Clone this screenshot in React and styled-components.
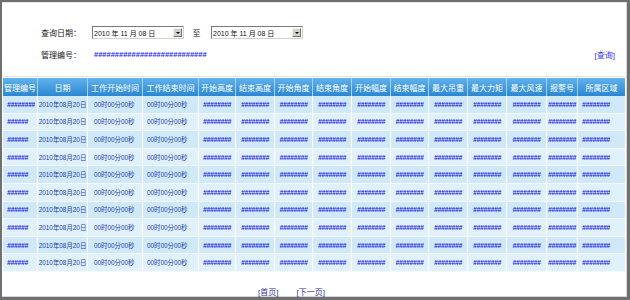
import React from 'react';
import styled, { createGlobalStyle } from 'styled-components';

const GlobalStyle = createGlobalStyle`
  html, body {
    margin: 0;
    padding: 0;
    background: #ffffff;
  }
`;

const COLS = [35, 50, 55, 56, 37, 39, 38, 39, 39, 38, 39, 39, 40, 31, 47];

const HEADERS = [
  '管理编号', '日期', '工作开始时间', '工作结束时间', '开始高度', '结束高度',
  '开始角度', '结束角度', '开始幅度', '结束幅度', '最大吊重', '最大力矩',
  '最大风速', '报警号', '所属区域',
];

const ROWS = Array.from({ length: 10 }, (_, i) => ({
  id: i === 0 ? '########' : '######',
  date: '2010年08月20日',
  start: '00时00分00秒',
  end: '00时00分00秒',
}));

const Frame = styled.div`
  width: 630px;
  height: 300px;
  box-sizing: border-box;
  border-style: solid;
  border-color: #707070;
  border-width: 2px 3px 3px 2px;
  overflow: hidden;
  font-family: "Liberation Sans", "Noto Sans CJK SC", sans-serif;
`;

const Inner = styled.div`
  height: 100%;
  box-sizing: border-box;
  border-top: 1px solid #e6e6e6;
  border-right: 1px solid #d6d6d6;
  border-bottom: 1px solid #d6d6d6;
`;

const Form = styled.div`
  padding: 23px 11px 0 39px;
`;

const FormRow = styled.div`
  display: flex;
  align-items: center;
  justify-content: ${({ spread }) => (spread ? 'space-between' : 'flex-start')};
  height: ${({ h }) => h}px;
  margin-top: ${({ mt }) => mt || 0}px;
`;

const Group = styled.div`
  display: flex;
  align-items: center;
`;

const Label = styled.span`
  width: 51px;
  font-size: 8px;
  color: #222;
  font-family: "Noto Sans CJK SC", sans-serif;
`;

const Select = styled.div`
  width: 92px;
  height: 13px;
  box-sizing: border-box;
  display: flex;
  align-items: center;
  justify-content: space-between;
  background: #fff;
  border-style: solid;
  border-width: 1px;
  border-color: #7a7a7a #d4d0c8 #d4d0c8 #7a7a7a;
  padding-left: 1px;
`;

const SelectText = styled.span`
  font-size: 7px;
  color: #111;
  white-space: pre;
  font-family: "Liberation Sans", "Noto Sans CJK SC", sans-serif;
`;

const DropButton = styled.span`
  width: 9px;
  height: 9px;
  margin-right: 1px;
  box-sizing: border-box;
  background: #d4d0c8;
  border-style: solid;
  border-width: 1px;
  border-color: #f4f4f4 #707070 #707070 #f4f4f4;
  display: flex;
  align-items: center;
  justify-content: center;

  &::after {
    content: '';
    border-left: 2px solid transparent;
    border-right: 2px solid transparent;
    border-top: 2px solid #000;
  }
`;

const To = styled.span`
  width: 27px;
  text-align: center;
  padding-right: 2px;
  box-sizing: border-box;
  font-size: 8px;
  color: #222;
  font-family: "Noto Sans CJK SC", sans-serif;
`;

const IdHashes = styled.span`
  padding-left: 2px;
  font-size: 7.5px;
  font-weight: bold;
  color: #2424ff;
`;

const LinkText = styled.span`
  font-size: 8px;
  color: ${({ dark }) => (dark ? '#333399' : '#3333ff')};
  font-family: "Liberation Sans", "Noto Sans CJK SC", sans-serif;
  white-space: nowrap;
`;

const Table = styled.div`
  margin: 15px 0 0 1px;
  width: 622px;
  border-top: 1px solid #e2e2e2;
  padding-top: 1px;
`;

const Row = styled.div`
  display: grid;
  grid-template-columns: ${COLS.map((c) => `${c}px`).join(' ')};
  height: ${({ head }) => (head ? '18px' : '17.6px')};
  background: ${({ head, odd }) =>
    head ? 'linear-gradient(#62b2ec, #2b87d3)' : odd ? '#e0f1fb' : '#cfe9f8'};
`;

const HeadCell = styled.div`
  display: flex;
  align-items: center;
  justify-content: center;
  color: #fff;
  font-size: 8px;
  font-family: "Noto Sans CJK SC", sans-serif;
  border-right: 1px solid #a6d2f3;
  white-space: nowrap;
  overflow: hidden;
  &:last-child {
    border-right: none;
  }
`;

const Cell = styled.div`
  display: flex;
  align-items: center;
  justify-content: ${({ align }) => align || 'center'};
  padding-left: ${({ pl }) => pl || 0}px;
  border-right: 1px solid #ffffff;
  border-bottom: 1px solid #f2fafe;
  white-space: nowrap;
  overflow: hidden;
  &:last-child {
    border-right: none;
  }
`;

const Hash = styled.span`
  font-size: 6.8px;
  letter-spacing: -0.3px;
  font-weight: bold;
  font-style: italic;
  color: #2424e6;
`;

const DataText = styled.span`
  font-size: 6.4px;
  color: #2340b4;
  font-family: "Liberation Sans", "Noto Sans CJK SC", sans-serif;
`;

const Pager = styled.div`
  display: flex;
  gap: 18px;
  margin-top: 16px;
  padding-left: 256px;
  line-height: 10px;
`;

const DateSelect = ({ value }) => (
  <Select>
    <SelectText>{value}</SelectText>
    <DropButton />
  </Select>
);

export default function App() {
  return (
    <>
      <GlobalStyle />
      <Frame>
        <Inner>
          <Form>
            <FormRow h={13}>
              <Label>查询日期：</Label>
              <DateSelect value="2010 年 11 月 08 日" />
              <To>至</To>
              <DateSelect value="2010 年 11 月 08 日" />
            </FormRow>
            <FormRow h={14} mt={8} spread>
              <Group>
                <Label>管理编号：</Label>
                <IdHashes>{'#'.repeat(27)}</IdHashes>
              </Group>
              <LinkText>[查询]</LinkText>
            </FormRow>
          </Form>

          <Table>
            <Row head>
              {HEADERS.map((h) => (
                <HeadCell key={h}>{h}</HeadCell>
              ))}
            </Row>
            {ROWS.map((r, i) => (
              <Row key={i} odd={i % 2 === 1}>
                <Cell align="flex-start" pl={4}>
                  <Hash>{r.id}</Hash>
                </Cell>
                <Cell>
                  <DataText>{r.date}</DataText>
                </Cell>
                <Cell align="flex-start" pl={6}>
                  <DataText>{r.start}</DataText>
                </Cell>
                <Cell align="flex-start" pl={4}>
                  <DataText>{r.end}</DataText>
                </Cell>
                {Array.from({ length: 10 }, (_, j) => (
                  <Cell key={j}>
                    <Hash>########</Hash>
                  </Cell>
                ))}
                <Cell align="flex-start" pl={4}>
                  <Hash>########</Hash>
                </Cell>
              </Row>
            ))}
          </Table>

          <Pager>
            <LinkText dark>[首页]</LinkText>
            <LinkText dark>[下一页]</LinkText>
          </Pager>
        </Inner>
      </Frame>
    </>
  );
}
